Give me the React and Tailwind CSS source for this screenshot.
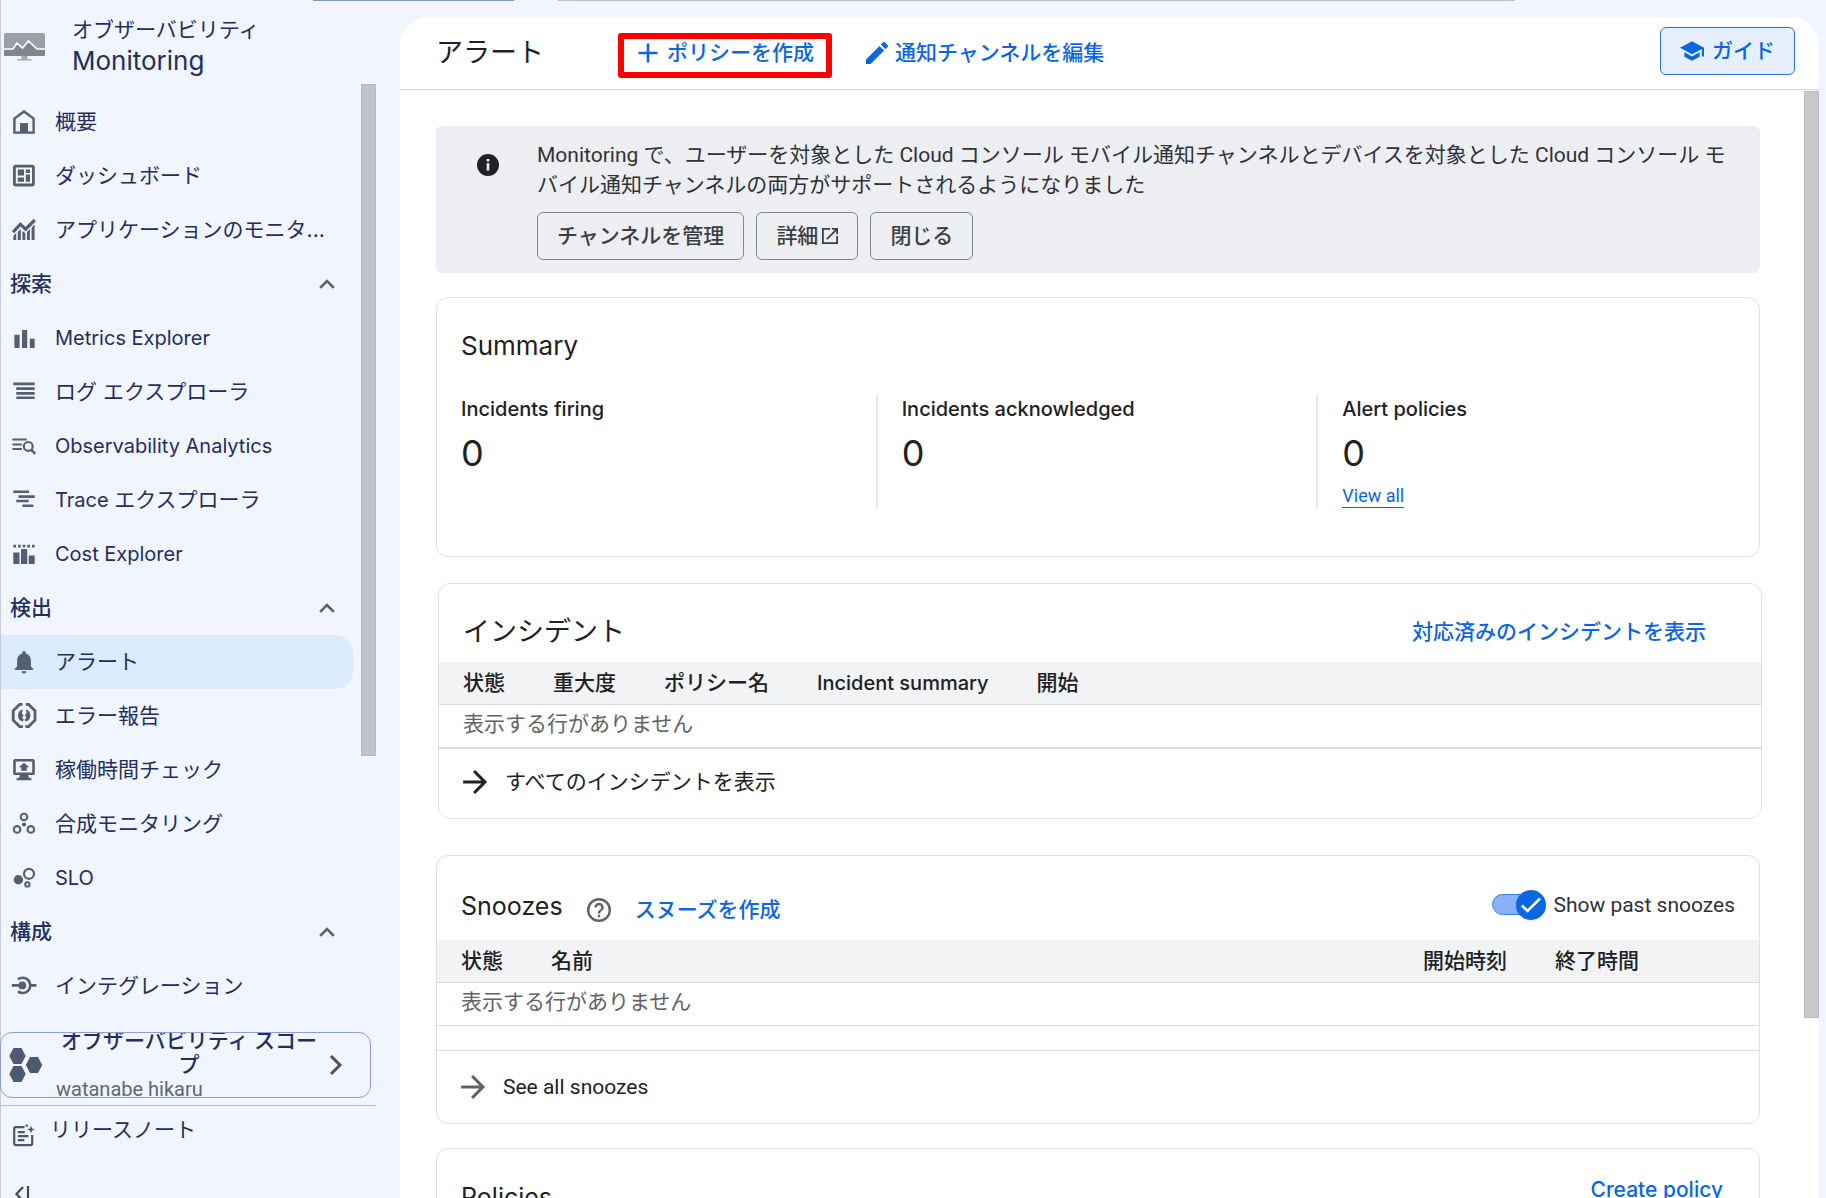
const ICONS = {
  home: (
    <>
      <path d="M2.4 22.6V8.6L12 1.6l9.6 7v14z" fill="none" stroke="currentColor" strokeWidth="2.4" />
      <path d="M8 13h8v10H8z" />
    </>
  ),
  dashboard: (
    <>
      <rect x="2.4" y="2.2" width="19" height="18.8" rx="1" fill="none" stroke="currentColor" strokeWidth="2.8" />
      <path d="M5.8 5.6h6.2v6H5.8zM5.8 13.4h6.2v4.4H5.8zM13.8 5.6H18V9h-4.2zM13.8 10.6H18v7.2h-4.2z" />
    </>
  ),
  app: (
    <>
      <path d="M1 14.2l7.4-8 5.2 5L22.8 2" fill="none" stroke="currentColor" strokeWidth="3.2" />
      <path d="M1.3 18l2.9-3v7H1.3zM5.8 14l3-3v11h-3zM10.4 13l2.9 2v7h-2.9zM15 14l2.9-3v11H15zM19.6 9.5l3-3V22h-3z" />
    </>
  ),
  metrics: <path d="M2.4 8.7h5.2V22H2.4zM10 4h5.2v18H10zM17.8 12.7h4.9V22h-4.9z" />,
  logs: <path d="M1.3 2.6h21.4v2.7H1.3zM4.3 7.3h18.4V10H4.3zM4.3 12h18.4v2.7H4.3zM4.3 16.4h18.4V19H4.3z" />,
  analytics: (
    <>
      <path d="M.4 4.5h14.3v2.1H.4zM.4 9.4h9.4v2.1H.4zM.4 14h9.4v2.1H.4z" />
      <path d="M19.4 15.8l3.8 4" fill="none" stroke="currentColor" strokeWidth="2.4" />
      <circle cx="16.3" cy="12.4" r="4.4" fill="none" stroke="currentColor" strokeWidth="2.2" />
    </>
  ),
  trace: <path d="M1.3 2.4H17V5H1.3zM6.5 7.2h16.2v2.7H6.5zM4.3 11.8h12.4v2.4H4.3zM10.4 16.4h11V19h-11z" />,
  cost: (
    <path d="M1.3 2.8H4v2.7H1.3zM6 2.8h2.7v2.7H6zM10.7 2.8h2.7v2.7h-2.7zM15.3 2.8H18v2.7h-2.7zM20 2.8h2.7v2.7H20zM1.3 10.6h6.2V22H1.3zM9 7h6.2v15H9zM16.7 13.4h6V22h-6z" />
  ),
  bell: (
    <path
      transform="translate(-1.8 -1.8) scale(1.15)"
      d="M12 22c1.1 0 2-.9 2-2h-4c0 1.1.9 2 2 2zm6-6v-5c0-3.07-1.64-5.64-4.5-6.32V4c0-.83-.67-1.5-1.5-1.5s-1.5.67-1.5 1.5v.68C7.63 5.36 6 7.92 6 11v5l-2 2v1h16v-1l-2-2z"
    />
  ),
  error: (
    <>
      <path
        d="M10.5.4H7.6L1.2 6.8v9.4l6.4 6.4H11M13.8.4h2.8L23 6.8v9.4l-6.4 6.4h-3.2"
        fill="none"
        stroke="currentColor"
        strokeWidth="2.8"
      />
      <path d="M10.8 5.6C7.6 6.2 6 8.6 6 11.6s1.6 5.4 4.8 6l1-2-1.8-2.2 1.6-2-1.8-2z" />
      <path d="M13.6 5.6c3.2.6 4.8 3 4.8 6s-1.6 5.400-4.8 6l-1-1.800 1.800-2.400-1.600-2 1.800-2.200z" />
    </>
  ),
  uptime: (
    <>
      <rect x="2.5" y="2.2" width="19" height="13.6" rx=".6" fill="none" stroke="currentColor" strokeWidth="2.6" />
      <path d="M12 4.8l5.4 4.4h-2.6v3.600H9.200V9.200H6.600zM8 16h8l1 4h2.400v2.300H4.600V20H7z" />
    </>
  ),
  synthetic: (
    <>
      <g fill="none" stroke="currentColor" strokeWidth="2.1">
        <circle cx="12" cy="5" r="3.3" />
        <circle cx="5.1" cy="17.4" r="3.3" />
        <circle cx="18.8" cy="17.4" r="3.3" />
      </g>
      <circle cx="12" cy="12.6" r="2.1" />
    </>
  ),
  slo: (
    <>
      <circle cx="6.4" cy="13.8" r="4.7" />
      <circle cx="17" cy="7.8" r="5" fill="none" stroke="currentColor" strokeWidth="2.2" />
      <circle cx="15.4" cy="18.4" r="2.2" fill="none" stroke="currentColor" strokeWidth="2" />
    </>
  ),
  integration: (
    <>
      <path d="M6 5.4a7.6 7.6 0 1 1 0 12" fill="none" stroke="currentColor" strokeWidth="2.6" />
      <circle cx="10.3" cy="11.4" r="3.9" />
      <path d="M-.2 10h8v2.8h-8zM18 10h6.4v2.8H18z" />
    </>
  ),
};

const NAV = [
  { icon: "home", label: "概要" },
  { icon: "dashboard", label: "ダッシュボード" },
  { icon: "app", label: "アプリケーションのモニタ..." },
  { heading: "探索" },
  { icon: "metrics", latin: "Metrics Explorer" },
  { icon: "logs", label: "ログ エクスプローラ" },
  { icon: "analytics", latin: "Observability Analytics" },
  { icon: "trace", latin: "Trace ", label: "エクスプローラ" },
  { icon: "cost", latin: "Cost Explorer" },
  { heading: "検出" },
  { icon: "bell", label: "アラート", active: true },
  { icon: "error", label: "エラー報告" },
  { icon: "uptime", label: "稼働時間チェック" },
  { icon: "synthetic", label: "合成モニタリング" },
  { icon: "slo", latin: "SLO" },
  { heading: "構成" },
  { icon: "integration", label: "インテグレーション" },
];

function NavRow({ item }) {
  if (item.heading) {
    return (
      <li>
        <button className="flex h-[54px] w-full items-center justify-between pl-[9px] pr-[18px] font-medium">
          {item.heading}
          <svg className="h-[10px] w-4 text-[#535f73]" viewBox="0 0 16 10" fill="none" stroke="currentColor" strokeWidth="2.6">
            <path d="M1.2 8.8L8 2l6.8 6.8" />
          </svg>
        </button>
      </li>
    );
  }
  return (
    <li>
      <a
        href="#"
        className={`flex h-[54px] items-center gap-[19px] pl-[11px] whitespace-nowrap ${
          item.active ? "rounded-r-[18px] bg-[#daebfc]" : ""
        }`}
      >
        <svg className="size-6 shrink-0 overflow-visible text-[#535f73]" viewBox="0 0 24 24" fill="currentColor">
          {ICONS[item.icon]}
        </svg>
        <span className="whitespace-pre">
          {item.latin && <span className="text-[20px]">{item.latin}</span>}
          {item.label}
        </span>
      </a>
    </li>
  );
}

function Sidebar() {
  return (
    <aside className="flex w-[400px] shrink-0 flex-col border-l border-[#c5cad6] text-[21px] leading-[30px] text-[#1f2f5f]">
      {/* Product header */}
      <div className="flex h-[84px] shrink-0 items-start gap-[27px] pl-[3px] pt-[15px]">
        <svg className="mt-[18px] h-7 w-[41px]" viewBox="0 0 41 28">
          <rect width="41" height="23" rx="1.5" fill="#9b9fa8" />
          <path d="M0 17h9l4.5-6 5 5L25 8l8 9h8v4.500a1.500 1.500 0 0 1-1.500 1.500h-38A1.500 1.500 0 0 1 0 21.500z" fill="#81858e" />
          <path d="M0 16h9l4-6 5.500 5 6-7 8.500 8h8" fill="none" stroke="#fff" strokeWidth="1.6" />
          <path d="M17.5 23h6v3h4v1.600h-14V26h4z" fill="#a5a9b1" />
        </svg>
        <div>
          <p>オブザーバビリティ</p>
          <p className="text-[26px] leading-8">Monitoring</p>
        </div>
      </div>

      {/* Navigation with its scrollbar */}
      <div className="flex shrink-0">
        <nav className="w-[352px] pt-[11px]">
          <ul>
            {NAV.map((item, index) => (
              <NavRow key={index} item={item} />
            ))}
          </ul>
        </nav>
        <div className="ml-2 h-[672px] w-[15px] border border-[#b4b9c3] bg-[#bec3cc]" />
      </div>

      {/* Scope picker */}
      <button className="-ml-px mt-[19px] flex h-[66px] w-[371px] shrink-0 items-center overflow-hidden rounded-xl border border-[#8da0cf] pl-2">
        <svg className="h-[34px] w-[34px] shrink-0 text-[#4a5a70]" viewBox="0 0 34 34" fill="currentColor">
          <path d="M4.5 0h8l4.2 8-4.2 8h-8L.3 8zM4.5 18h8l4.2 8-4.2 8h-8L.3 26zM21 9h8l4.2 8L29 25h-8l-4.200-8z" />
        </svg>
        <span className="ml-[13px] w-[266px] shrink-0 leading-6">
          <span className="block text-center font-medium">オブザーバビリティ スコープ</span>
          <span className="block text-left font-['Roboto'] text-[20px] text-[#5c6878]">watanabe hikaru</span>
        </span>
        <svg className="ml-[7px] h-[22px] w-[14px] shrink-0 text-[#4a5568]" viewBox="0 0 14 22" fill="none" stroke="currentColor" strokeWidth="3">
          <path d="M2 2l9 9-9 9" />
        </svg>
      </button>

      {/* Footer */}
      <div className="mt-[7px] w-[375px] shrink-0 border-t border-[#b3bddb]">
        <a href="#" className="flex items-start gap-[15px] pl-3 pt-[9px]">
          <svg className="mt-2 h-6 w-[22px] text-[#4a5a70]" viewBox="0 0 22 24" fill="currentColor">
            <path
              d="M11.5 4.2H2.800A1.600 1.600 0 0 0 1.200 5.800v14.800a1.600 1.600 0 0 0 1.600 1.600h14.800a1.600 1.600 0 0 0 1.600-1.600V12"
              fill="none"
              stroke="currentColor"
              strokeWidth="2.2"
            />
            <path d="M4.8 8h7v2.200h-7zM4.800 12h10.600v2.200H4.800zM4.800 16h6.600v2.200H4.800z" />
            <path d="M18 2.500l1.100 2.900 2.900 1.100-2.900 1.100L18 10.500l-1.100-2.900L14 6.500l2.900-1.100zM13.800.6l.6 1.400 1.400.6-1.400.6-.6 1.400-.6-1.400-1.400-.6 1.400-.6z" />
          </svg>
          リリースノート
        </a>
        <button aria-label="メニューを閉じる" className="mt-[39px] block pl-[14px]">
          <svg className="h-4 w-4 text-[#3c4657]" viewBox="0 0 16 16" fill="none" stroke="currentColor" strokeWidth="2.2">
            <path d="M8 1L1.500 8 8 15M13 0v16" />
          </svg>
        </button>
      </div>
    </aside>
  );
}

function Card({ className = "", children }) {
  return <section className={`rounded-xl border border-[#dfe0e3] ${className}`}>{children}</section>;
}

function Arrow({ className }) {
  return (
    <svg className={`h-6 w-[25px] ${className}`} viewBox="4 4 16.5 16" fill="currentColor">
      <path d="M12 4l-1.410 1.410L16.170 11H4v2h12.170l-5.580 5.590L12 20l8-8z" />
    </svg>
  );
}

const Th = ({ children, className = "" }) => (
  <th className={`h-[42px] border-b border-[#d8dadf] bg-[#f1f3f4] px-6 text-left font-medium whitespace-nowrap ${className}`}>
    {children}
  </th>
);

const STATS = [
  { label: "Incidents firing", value: 0 },
  { label: "Incidents acknowledged", value: 0 },
  { label: "Alert policies", value: 0, link: "View all" },
];

function Header() {
  return (
    <header className="flex h-[73px] shrink-0 items-center border-b border-[#d5d6d9] pl-9 pr-6">
      <h1 className="text-[27px]">アラート</h1>
      <button className="relative ml-[94px] flex items-center gap-[9px] font-medium text-[#0b66e0]">
        <svg className="size-5" viewBox="0 0 20 20" fill="none" stroke="currentColor" strokeWidth="2.6">
          <path d="M10 .5v19M.5 10h19" />
        </svg>
        ポリシーを作成
        <span className="absolute -bottom-[10px] -left-5 -right-[18px] -top-[5px] rounded-[3px] border-[6px] border-[#fe0000]" />
      </button>
      <button className="ml-[52px] flex items-center gap-[7px] font-medium text-[#0b66e0]">
        <svg className="size-[22px]" viewBox="3 3 18 18" fill="currentColor">
          <path d="M3 17.250V21h3.750L17.810 9.940l-3.750-3.750L3 17.250zM20.710 7.040a1 1 0 0 0 0-1.410l-2.340-2.340a1 1 0 0 0-1.410 0l-1.830 1.830 3.750 3.750 1.830-1.830z" />
        </svg>
        通知チャンネルを編集
      </button>
      <button className="mb-1 ml-auto flex h-12 items-center gap-2 rounded-md border border-[#2a74e0] bg-[#e6effe] px-[19px] font-medium text-[#0b66e0]">
        <svg className="h-5 w-6" viewBox="1 3 22 18" fill="currentColor">
          <path d="M5 13.180v4L12 21l7-3.820v-4L12 17l-7-3.820zM12 3L1 9l11 6 9-4.910V17h2V9L12 3z" />
        </svg>
        ガイド
      </button>
    </header>
  );
}

function Banner() {
  const button = "flex h-12 items-center gap-1 rounded-md border border-[#7c8694] px-[19px] font-medium text-[#3c4043]";
  return (
    <div className="flex gap-[38px] rounded-md bg-[#edeef2] pb-[13px] pl-[41px] pr-8 pt-[14px] font-['Roboto','Noto_Sans_CJK_JP',sans-serif] text-[#2f3237]">
      <svg className="mt-[14px] size-[22px] shrink-0" viewBox="2 2 20 20" fill="#202124">
        <path d="M12 2a10 10 0 1 0 0 20 10 10 0 0 0 0-20zm1.200 15h-2.400v-6.500h2.400zm0-8.200h-2.400V6.500h2.400z" />
      </svg>
      <div>
        <p>
          Monitoring で、ユーザーを対象とした Cloud コンソール モバイル通知チャンネルとデバイスを対象とした Cloud コンソール モバイル通知チャンネルの両方がサポートされるようになりました
        </p>
        <div className="mt-3 flex gap-3">
          <button className={button}>チャンネルを管理</button>
          <button className={button}>
            詳細
            <svg className="size-4" viewBox="3 3 18 18" fill="currentColor">
              <path d="M19 19H5V5h7V3H3v18h18v-9h-2v7zM14 3v2h3.590l-9.830 9.830 1.410 1.410L19 6.410V10h2V3h-7z" />
            </svg>
          </button>
          <button className={button}>閉じる</button>
        </div>
      </div>
    </div>
  );
}

function Summary() {
  return (
    <Card className="mt-6 pb-12 pt-[30px]">
      <h2 className="px-6 text-[26px] leading-9">Summary</h2>
      <div className="mt-[30px] grid grid-cols-3">
        {STATS.map((stat) => (
          <div key={stat.label} className="h-[114px] border-r-2 border-[#e8e9eb] pl-6 last:border-transparent">
            <p className="text-[20px] font-medium">{stat.label}</p>
            <p className="mt-[9px] text-[36px] leading-10">{stat.value}</p>
            {stat.link && (
              <a href="#" className="mt-[11px] inline-block border-b border-[#0b66e0] font-['Roboto'] text-[18px] leading-[23px] text-[#0b66e0]">
                {stat.link}
              </a>
            )}
          </div>
        ))}
      </div>
    </Card>
  );
}

function Incidents() {
  return (
    <Card className="-mr-0.5 ml-0.5 mt-[26px]">
      <div className="flex h-[78px] items-center justify-between pl-6 pr-[55px] pt-[18px]">
        <h2 className="text-[27px]">インシデント</h2>
        <a href="#" className="font-medium text-[#0b66e0]">対応済みのインシデントを表示</a>
      </div>
      <table className="w-full">
        <thead>
          <tr>
            <Th>状態</Th>
            <Th>重大度</Th>
            <Th>ポリシー名</Th>
            <Th className="text-[20px]">Incident summary</Th>
            <Th className="w-full">開始</Th>
          </tr>
        </thead>
        <tbody>
          <tr>
            <td colSpan={5} className="h-11 border-b-2 border-[#d8dadf] px-6 pb-1 text-[#5f6368]">表示する行がありません</td>
          </tr>
        </tbody>
      </table>
      <a href="#" className="flex h-[69px] items-center gap-[17px] px-6 pb-[3px]">
        <Arrow className="text-[#202124]" />
        すべてのインシデントを表示
      </a>
    </Card>
  );
}

function Snoozes() {
  return (
    <Card className="mt-9">
      <div className="flex h-[84px] items-center px-6 pt-4">
        <h2 className="text-[25px]">Snoozes</h2>
        <svg className="ml-6 mt-2 size-6 text-[#5f6368]" viewBox="2 2 20 20" fill="currentColor">
          <path d="M11 18h2v-2h-2v2zm1-16a10 10 0 1 0 0 20 10 10 0 0 0 0-20zm0 18a8 8 0 1 1 0-16 8 8 0 0 1 0 16zm0-14a4 4 0 0 0-4 4h2a2 2 0 1 1 4 0c0 2-3 1.750-3 5h2c0-2.250 3-2.500 3-5a4 4 0 0 0-4-4z" />
        </svg>
        <a href="#" className="ml-6 mt-2 font-medium text-[#0b66e0]">スヌーズを作成</a>
        <label className="mb-[3px] ml-auto flex items-center gap-[7px] font-['Roboto'] text-[#2f3237]">
          <input type="checkbox" defaultChecked className="peer sr-only" />
          <span className="relative h-[21px] w-[54px]">
            <span className="block h-full w-12 rounded-full border border-[#3b7de6] bg-[#8ab0f7]" />
            <span className="absolute -top-1 right-0 flex size-[30px] items-center justify-center rounded-full bg-[#0b66e0] shadow">
              <svg className="size-5" viewBox="0 0 20 20" fill="none" stroke="#fff" strokeWidth="2.6">
                <path d="M1 10.500l5.500 5.500L19 3.500" />
              </svg>
            </span>
          </span>
          Show past snoozes
        </label>
      </div>
      <table className="w-full">
        <thead>
          <tr>
            <Th>状態</Th>
            <Th className="w-full">名前</Th>
            <Th>開始時刻</Th>
            <Th>終了時間</Th>
            <Th className="min-w-24" />
          </tr>
        </thead>
        <tbody>
          <tr>
            <td colSpan={5} className="h-[43px] border-b border-[#d8dadf] px-6 pb-1 text-[#5f6368]">表示する行がありません</td>
          </tr>
        </tbody>
      </table>
      <a href="#" className="mt-6 flex h-[73px] items-center gap-[17px] border-t border-[#d8dadf] px-6 font-['Roboto']">
        <Arrow className="text-[#5f6368]" />
        See all snoozes
      </a>
    </Card>
  );
}

function Policies() {
  return (
    <Card className="mt-6 flex h-[200px] items-start justify-between pl-6 pr-9 pt-[26px]">
      <h2 className="mt-[7px] text-[25px]">Policies</h2>
      <a href="#" className="font-medium text-[#0b66e0]">Create policy</a>
    </Card>
  );
}

export default function App() {
  return (
    <div className="flex h-screen overflow-hidden bg-[#f0f5ff] font-['Inter','Noto_Sans_CJK_JP',sans-serif] text-[21px] leading-[30px] text-[#202124]" lang="ja">
      <Sidebar />
      <div className="flex min-w-0 flex-1 flex-col pr-[7px]">
        {/* Lower edges of the bars in the console header */}
        <div className="-ml-[87px] flex h-[17px] shrink-0 gap-11">
          <div className="h-px w-[201px] bg-[#8091c6]" />
          <div className="mr-[304px] h-px flex-1 bg-[#b5bfdd]" />
        </div>
        <div className="flex min-h-0 flex-1 flex-col rounded-t-[28px] bg-white">
          <Header />
          <div className="flex min-h-0 flex-1">
            <main className="min-w-0 flex-1 pl-9 pr-11 pt-9">
              <Banner />
              <Summary />
              <Incidents />
              <Snoozes />
              <Policies />
            </main>
            <div className="mt-px h-[927px] w-[15px] border border-[#bababa] bg-[#c9c9c9]" />
          </div>
        </div>
      </div>
    </div>
  );
}
